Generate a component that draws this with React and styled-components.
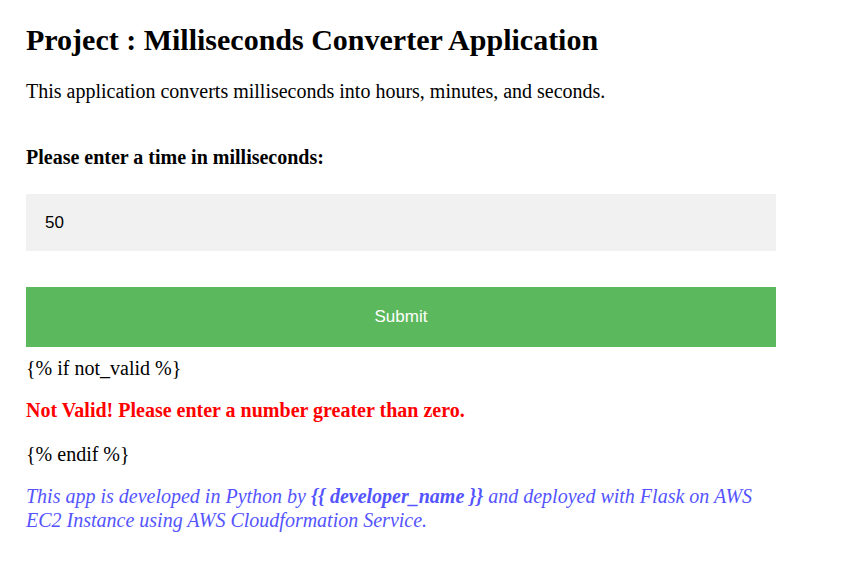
import React, { useState } from "react";
import styled, { createGlobalStyle } from "styled-components";

const GlobalStyle = createGlobalStyle`
  html, body {
    margin: 0;
    padding: 0;
    background: #ffffff;
  }
  body {
    font-family: "Liberation Serif", "Times New Roman", serif;
    color: #000000;
  }
`;

const Page = styled.div`
  width: 750px;
  padding: 23px 26px 30px;
`;

const Title = styled.h1`
  font-size: 30px;
  line-height: 34px;
  font-weight: bold;
  margin: 0;
`;

const Intro = styled.p`
  font-size: 20px;
  line-height: 23px;
  margin: 23px 0 0;
`;

const Form = styled.form`
  display: flex;
  flex-direction: column;
  margin-top: 43px;
`;

const Label = styled.label`
  font-size: 20px;
  line-height: 23px;
  font-weight: bold;
  margin-bottom: 25px;
`;

const Input = styled.input`
  box-sizing: border-box;
  width: 100%;
  height: 57px;
  padding: 0 19px;
  border: none;
  background: #f1f1f1;
  font-family: "Liberation Sans", Arial, sans-serif;
  font-size: 17px;
  color: #000;
  outline: none;
  margin: 0 0 36px;
`;

const Button = styled.button`
  width: 100%;
  height: 60px;
  border: none;
  background: #5cb85c;
  color: #ffffff;
  font-family: "Liberation Sans", Arial, sans-serif;
  font-size: 17px;
  cursor: pointer;
`;

const Line = styled.p`
  font-size: 20px;
  line-height: 23px;
  margin: ${(p) => p.$top}px 0 0;
  color: ${(p) => (p.$error ? "#ff0000" : "#000")};
  font-weight: ${(p) => (p.$error ? "bold" : "normal")};
`;

const Footer = styled.p`
  font-size: 20px;
  font-style: italic;
  color: #5454ff;
  margin: 18px 0 0;
  line-height: 24px;
`;

export default function App() {
  const [value, setValue] = useState("50");
  return (
    <Page>
      <GlobalStyle />
      <Title>Project : Milliseconds Converter Application</Title>
      <Intro>This application converts milliseconds into hours, minutes, and seconds.</Intro>
      <Form onSubmit={(e) => e.preventDefault()}>
        <Label htmlFor="ms">Please enter a time in milliseconds:</Label>
        <Input id="ms" type="text" value={value} onChange={(e) => setValue(e.target.value)} />
        <Button type="submit">Submit</Button>
      </Form>
      <Line $top={10}>{"{% if not_valid %}"}</Line>
      <Line $top={19} $error>Not Valid! Please enter a number greater than zero.</Line>
      <Line $top={21}>{"{% endif %}"}</Line>
      <Footer>
        This app is developed in Python by <b>{"{{ developer_name }}"}</b> and deployed with Flask on AWS EC2 Instance using AWS Cloudformation Service.
      </Footer>
    </Page>
  );
}
